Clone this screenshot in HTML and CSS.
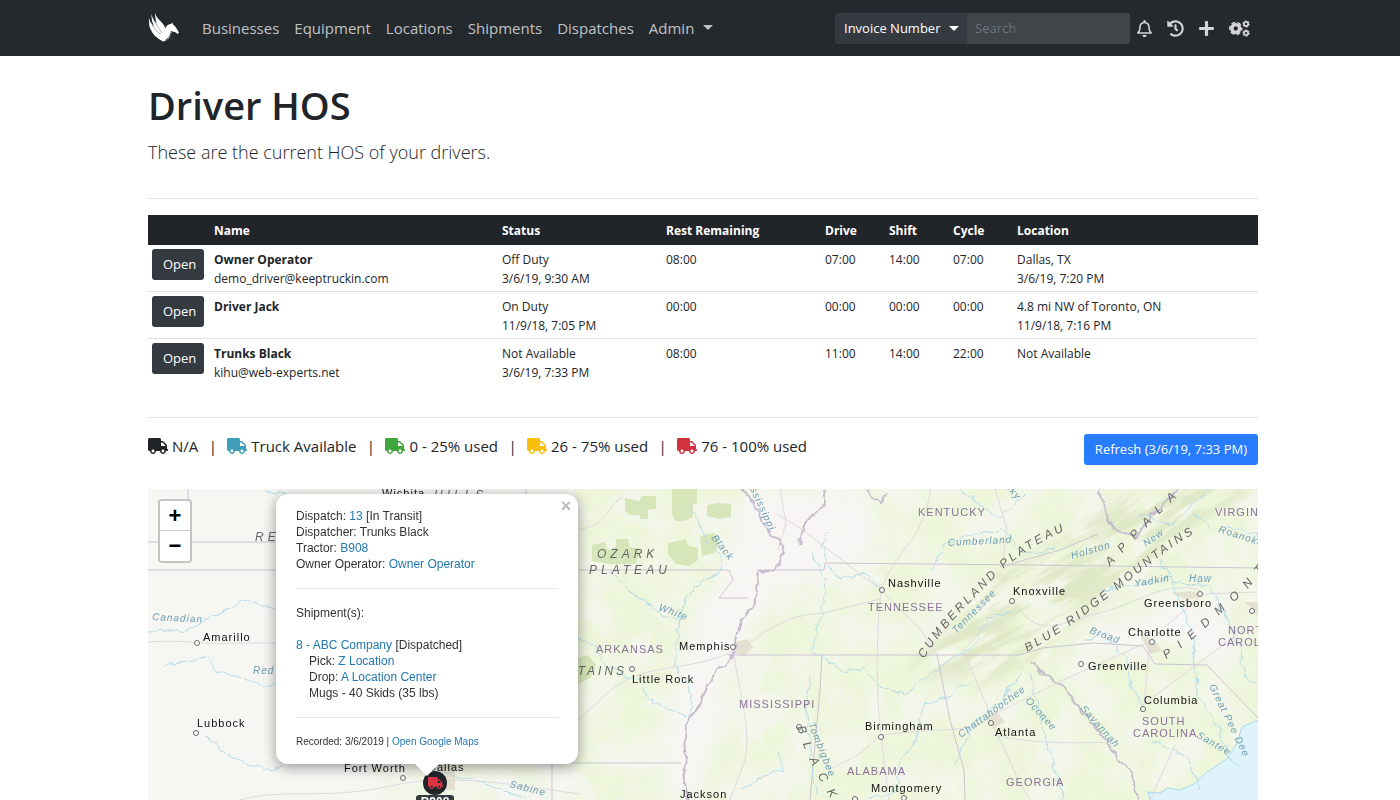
FILE: index.html
```
<!DOCTYPE html>
<html lang="en">
<head>
    <meta charset="UTF-8">
    <meta name="viewport" content="width=device-width, initial-scale=1">
    <title>Driver HOS</title>
    <link rel="stylesheet" href="styles.css">
</head>
<body>
    <!-- shared icons -->
    <svg class="sprite" aria-hidden="true">
        <symbol id="truck" viewBox="0 0 640 512">
            <path d="M624 352h-16V243.900c0-12.700-5.100-24.900-14.100-33.900L494 110.100c-9-9-21.200-14.100-33.900-14.100H416V48c0-26.500-21.500-48-48-48H48C21.500 0 0 21.500 0 48v320c0 26.500 21.500 48 48 48h16c0 53 43 96 96 96s96-43 96-96h128c0 53 43 96 96 96s96-43 96-96h48c8.800 0 16-7.200 16-16v-32c0-8.800-7.200-16-16-16zM160 464c-26.500 0-48-21.500-48-48s21.500-48 48-48 48 21.500 48 48-21.500 48-48 48zm320 0c-26.500 0-48-21.500-48-48s21.500-48 48-48 48 21.500 48 48-21.500 48-48 48zm80-208H416V144h44.100l99.900 99.900V256z"/>
        </symbol>
    </svg>

    <nav class="navbar">
        <div class="container navbar-inner">
            <a class="brand" href="#" aria-label="Home">
                <svg width="32" height="32" viewBox="0 0 32 32" fill="#fff">
                    <path d="M7 .5C8 6 12 8 15 12c2 3 3 5 3 8l-4 2C10 17 7 9 7 .5z"/>
                    <path d="M3.500 1.500C4 8 9 11 12 15l2 6-3 1C6 16 3 9 3.500 1.500z"/>
                    <path d="M1 5.500C1.500 11 6 14 9 17l4 6-3 1C4 19 0 12 1 5.500z"/>
                    <path d="M1 10.500c2 5 5 6 8 9l3 5-2 1C5 22 1 17 1 10.500z"/>
                    <path d="M3.500 17c2 3 5 4 7 6l3 4.500C8 26 4 22 3.500 17z"/>
                    <path d="M10 22c4 0 6-3 8-7 1-2 3-3 5-3l1.500-1.500.5 2c3 2 4 5 6 8l-1.500 1.500-2.500-2-3-.5c-1 4-3 9-9 10l-5-3z"/>
                    <path d="M23.500 19c-1 4-2 7-6 9" fill="none" stroke="#24292e" stroke-width="1"/>
                    <path d="M6 8c2 5 5 8 8 13M4 13c2 3 5 6 8 9" fill="none" stroke="#24292e" stroke-width=".4"/>
                </svg>
            </a>
            <div class="nav-links">
                <a href="#">Businesses</a>
                <a href="#">Equipment</a>
                <a href="#">Locations</a>
                <a href="#">Shipments</a>
                <a href="#">Dispatches</a>
                <button type="button" class="caret">Admin</button>
            </div>
            <form class="search">
                <div class="search-type caret">
                    <select aria-label="Search by">
                        <option>Invoice Number</option>
                    </select>
                </div>
                <input type="text" placeholder="Search" aria-label="Search">
            </form>
            <div class="nav-icons">
                <a href="#" aria-label="Notifications">
                    <svg width="15" height="17" viewBox="0 0 448 512"><path d="M439.390 362.290c-19.320-20.760-55.470-51.990-55.470-154.290 0-77.700-54.480-139.900-127.940-155.160V32c0-17.670-14.320-32-31.980-32s-31.980 14.330-31.980 32v20.840C118.560 68.100 64.080 130.300 64.080 208c0 102.300-36.150 133.530-55.470 154.290-6 6.450-8.660 14.160-8.610 21.710.11 16.400 12.980 32 32.100 32h383.800c19.120 0 32-15.600 32.100-32 .05-7.550-2.610-15.270-8.610-21.710zM67.530 368c21.220-27.970 44.420-74.330 44.530-159.420 0-.2-.06-.38-.06-.58 0-61.860 50.140-112 112-112s112 50.140 112 112c0 .2-.06.38-.06.58.11 85.100 23.310 131.460 44.530 159.420H67.530zM224 512c35.320 0 63.970-28.650 63.970-64H160.030c0 35.350 28.650 64 63.970 64z"/></svg>
                </a>
                <a href="#" aria-label="History">
                    <svg width="17" height="17" viewBox="0 0 512 512"><path d="M504 255.531c.253 136.640-111.180 248.372-247.820 248.468-59.015.042-113.223-20.530-155.822-54.911-11.077-8.940-11.905-25.541-1.839-35.607l11.267-11.267c8.609-8.609 22.353-9.551 31.891-1.984C173.062 425.135 212.781 440 256 440c101.705 0 184-82.311 184-184 0-101.705-82.311-184-184-184-48.814 0-93.149 18.969-126.068 49.932l50.754 50.754c10.080 10.080 2.941 27.314-11.313 27.314H24c-8.837 0-16-7.163-16-16V38.627c0-14.254 17.234-21.393 27.314-11.314l49.372 49.372C129.209 34.136 189.552 8 256 8c136.810 0 247.747 110.780 248 247.531zm-180.912 78.784l9.823-12.630c8.138-10.463 6.253-25.542-4.210-33.679L288 256.349V152c0-13.255-10.745-24-24-24h-16c-13.255 0-24 10.745-24 24v135.651l65.409 50.874c10.463 8.137 25.541 6.253 33.679-4.210z"/></svg>
                </a>
                <a href="#" aria-label="Add">
                    <svg width="15" height="17" viewBox="0 0 448 512"><path d="M416 208H272V64c0-17.670-14.330-32-32-32h-32c-17.670 0-32 14.330-32 32v144H32c-17.670 0-32 14.330-32 32v32c0 17.670 14.330 32 32 32h144v144c0 17.670 14.330 32 32 32h32c17.670 0 32-14.330 32-32V304h144c17.670 0 32-14.330 32-32v-32c0-17.670-14.330-32-32-32z"/></svg>
                </a>
                <a href="#" aria-label="Settings">
                    <svg width="21" height="17" viewBox="0 0 640 512" fill="none" stroke="currentColor">
                        <circle cx="205" cy="256" r="118" stroke-width="104"/>
                        <circle cx="205" cy="256" r="182" stroke-width="48" stroke-dasharray="120 70.600" stroke-dashoffset="60"/>
                        <circle cx="520" cy="116" r="64" stroke-width="54"/>
                        <circle cx="520" cy="116" r="98" stroke-width="30" stroke-dasharray="52 50.600"/>
                        <circle cx="520" cy="396" r="64" stroke-width="54"/>
                        <circle cx="520" cy="396" r="98" stroke-width="30" stroke-dasharray="52 50.600"/>
                    </svg>
                </a>
            </div>
        </div>
    </nav>

    <main class="container content">
        <h1>Driver HOS</h1>
        <p class="lead">These are the current HOS of your drivers.</p>
        <hr>
        <table class="drivers">
            <thead>
                <tr>
                    <th class="col-open"></th>
                    <th class="col-name">Name</th>
                    <th class="col-status">Status</th>
                    <th class="col-rest">Rest Remaining</th>
                    <th class="col-time">Drive</th>
                    <th class="col-time">Shift</th>
                    <th class="col-time">Cycle</th>
                    <th>Location</th>
                </tr>
            </thead>
            <tbody>
                <tr>
                    <td><button type="button" class="btn btn-dark">Open</button></td>
                    <td><strong>Owner Operator</strong><br>demo_driver@keeptruckin.com</td>
                    <td>Off Duty<br>3/6/19, 9:30 AM</td>
                    <td>08:00</td>
                    <td>07:00</td>
                    <td>14:00</td>
                    <td>07:00</td>
                    <td>Dallas, TX<br>3/6/19, 7:20 PM</td>
                </tr>
                <tr>
                    <td><button type="button" class="btn btn-dark">Open</button></td>
                    <td><strong>Driver Jack</strong></td>
                    <td>On Duty<br>11/9/18, 7:05 PM</td>
                    <td>00:00</td>
                    <td>00:00</td>
                    <td>00:00</td>
                    <td>00:00</td>
                    <td>4.8 mi NW of Toronto, ON<br>11/9/18, 7:16 PM</td>
                </tr>
                <tr>
                    <td><button type="button" class="btn btn-dark">Open</button></td>
                    <td><strong>Trunks Black</strong><br>kihu@web-experts.net</td>
                    <td>Not Available<br>3/6/19, 7:33 PM</td>
                    <td>08:00</td>
                    <td>11:00</td>
                    <td>14:00</td>
                    <td>22:00</td>
                    <td>Not Available</td>
                </tr>
            </tbody>
        </table>
        <hr>
        <div class="toolbar">
            <div class="legend">
                <span class="item"><svg class="truck"><use href="#truck"/></svg>N/A</span>
                <span class="sep">|</span>
                <span class="item"><svg class="truck available"><use href="#truck"/></svg>Truck Available</span>
                <span class="sep">|</span>
                <span class="item"><svg class="truck low"><use href="#truck"/></svg>0 - 25% used</span>
                <span class="sep">|</span>
                <span class="item"><svg class="truck mid"><use href="#truck"/></svg>26 - 75% used</span>
                <span class="sep">|</span>
                <span class="item"><svg class="truck high"><use href="#truck"/></svg>76 - 100% used</span>
            </div>
            <button type="button" class="btn btn-primary">Refresh (3/6/19, 7:33 PM)</button>
        </div>

        <div class="map">
            <svg class="tiles" viewBox="148 489 1110 311" preserveAspectRatio="xMinYMin slice">
                <defs>
                    <filter id="terrain" x="0" y="0" width="100%" height="100%">
                        <feTurbulence type="fractalNoise" baseFrequency=".026" numOctaves="6" seed="8"/>
                        <feColorMatrix values="0 0 0 0 .85  0 0 0 0 .92  0 0 0 0 .71  0 4 0 0 -1.400"/>
                    </filter>
                    <filter id="ridge" x="0" y="0" width="100%" height="100%">
                        <feTurbulence type="fractalNoise" baseFrequency=".018 .09" numOctaves="4" seed="3"/>
                        <feColorMatrix values="0 0 0 0 .74  0 0 0 0 .81  0 0 0 0 .57  0 5 0 0 -2.100"/>
                    </filter>
                    <filter id="wiggle" filterUnits="userSpaceOnUse" x="148" y="480" width="1110" height="330">
                        <feTurbulence type="fractalNoise" baseFrequency=".09" numOctaves="2" seed="5"/>
                        <feDisplacementMap in="SourceGraphic" scale="9" xChannelSelector="R" yChannelSelector="G"/>
                    </filter>
                    <filter id="soft"><feGaussianBlur stdDeviation="9"/></filter>
                    <mask id="mountains" maskUnits="userSpaceOnUse" x="148" y="480" width="1110" height="330">
                        <path fill="#fff" filter="url(#soft)" d="M905 675L950 620 1000 570 1060 540 1120 500 1150 480H1270L1200 525 1150 565 1090 610 1050 650 1000 680z"/>
                    </mask>
                    <path id="p-cumberland-plateau" d="M924 659C945 625 965 608 992 580S1045 540 1076 525"/>
                    <path id="p-blue-ridge" d="M1027 652C1060 634 1085 615 1115 592S1170 545 1208 526"/>
                    <path id="p-appala" d="M1110 566C1130 546 1150 522 1186 488"/>
                    <path id="p-piedmont" d="M1166 659C1195 640 1215 618 1236 600S1258 574 1280 552"/>
                    <path id="p-black" d="M797 727C805 752 812 767 836 808"/>
                </defs>

                <rect class="land" x="148" y="489" width="1110" height="311"/>
                <rect class="green" x="575" y="489" width="683" height="311"/>
                <rect x="575" y="489" width="683" height="311" filter="url(#terrain)"/>
                <rect x="370" y="765" width="205" height="35" filter="url(#terrain)" opacity=".6"/>
                <g filter="url(#soft)">
                    <path class="plain" d="M745 489H870L880 530 850 580 770 590 750 640 730 670 722 720 700 800H660L665 720 695 620 720 570z"/>
                    <path class="plain" d="M1120 620L1220 600 1240 680 1170 640 1060 660z"/>
                </g>
                <g mask="url(#mountains)">
                    <rect x="800" y="300" width="600" height="600" transform="rotate(-33 1080 580)" filter="url(#ridge)"/>
                </g>
                <g class="forest">
                    <path d="M625 498l14 3 3-5h14v13l-8 1v9h-7l-2-4h-10l-4-5zM672 489h25v14l-4 2v12l-8 4h-10l-3-7zM707 505l10-2 14 1v13l-12 2-12-3zM668 543l18-4 2 7 10 2v12l-8 6-14-2-8-10zM700 536l14-3 5 9-4 11-13 3zM592 545l13-3 3 8 8-3v-8h12l2 8 10 2-4 15h-28l-16-3zM570 660l18-5 8 10-6 13-20 10z"/>
                </g>
                <path class="urban" d="M735 642l12-3 6 8-8 9-10-3zM985 715l12-3 8 10-12 6zM425 765h30v25h-25zM1140 635l14 4 8 12-12 3zM1172 593l18-2 14 4-16 5zM1245 602h13v14z"/>
                <path class="water" d="M1258 720l-16 7-5 16-10 16-20 13-13 12-14 6-12-2-8 5-12-1 2 8h110z"/>

                <g class="roads">
                    <path d="M148 642c40-3 60 4 90 1h40M240 800c40-12 90 0 150-14s130 0 190 8M578 720c25-20 30-33 55-43 40-16 80-5 130-44 25-16 40-18 60-20l58-14M881 590c20-50 38-40 50-101M881 590L800 528l-23-14M881 590c-6 60-4 110 0 145l8 65M881 590l40 40 16 25M881 735c60-8 90 0 112-20l70-35 85-38 55-48 55-2M828 770l30-15 23-20M733 650c8 50 18 80 12 110l-15 40M992 723l28 60 10 17M992 735c60 12 100 6 120 8M1200 590c-40-10-60 15-110 25-50 20-60 10-77-14M1013 600l-50 50 28 66M1150 800l25-55M1143 705l100-75M1150 640l-6 65M578 530c30-5 25-20 45-33M780 489l6 34-8 27M995 489l12 40-4 30"/>
                </g>
                <g class="borders">
                    <path d="M148 542H278M148 570H278M188 489V542M570 570H729L733 580 719 598H748M765 570H824L825 563 1030 565 1258 568M728 655H1020L1042 648 1093 643 1143 646 1155 664 1207 665 1258 718M822 655L820 690 810 800M937 655L950 720 964 770 965 800M570 763H681M552 763V800M526 489V495M1000 567L1060 550 1098 534"/>
                </g>
                <g filter="url(#wiggle)">
                    <path class="state-river" d="M738 484l16 18 10 24 14 14 6 12-8 16-16 4-4 20-2 14-12 12-5 20-3 14-6 10-14 13-6 14-10 20-12 14-1 18 2 18-4 14 6 30"/>
                    <path class="state-river" d="M800 545l6-24 20-20-2-12M866 489l15 14 6-10M1100 489l5 26 10 15 20 6 14-18 30-30M1032 662l14 14 16 8 14 20 18 20 24 34 14 18 8 30"/>
                    <path class="river" d="M690 502l12 28 4 14 16 14-2 14-20 12-14 14-6 20-4 24v26l12 18 4 18-2 14M612 570l16 20 14 8 14 12 22 10M575 635l20 10 12 22 32 14 8 16 22 12 18 8M828 532l-6 14 12 28 14 4 20-4 16 18M812 552l14 30-6 40-10 28 34 22 20-4 14 16 26 12 28-24 40-26 16-26 24-8M810 675l-4 40 10 80M932 570l12-26 30-10 30-4 20 24 30-4M868 800l30-10-2-20 20-30 8-36 30-8 4-10 16-2M955 765l16-40 30-24 22-32M148 632l40-2 24-12 30-18 36 10M165 665l30-4 10-6 14 18 20 4 24 8h20M205 736l14 10 14 12 34 12 14-4M265 489l30 10M430 770l50 12 46 16M740 790l20-12 22-8-4-18M1030 672l14 60 14 50 6 18M1160 560l10 16 22 60 6 60 20 30 10 30 16 14M1100 590l50-8 20-6M1083 640l20-6 24 24 4 28 14 24M1150 740l40 20 10 30M1170 582l40 4 30 60 4 30 14 6M960 489l40 30 24-26M1140 515l30 10 40-36M1226 525l30 8 10 30M1210 530l-20-26"/>
                </g>
                <path class="coast" d="M1258 720l-16 7-5 16-10 16-20 13-13 12-14 6-12-2-8 5-12-1 2 8"/>

                <g class="cities">
                    <circle cx="197" cy="643" r="2.500"/><text x="203" y="641">Amarillo</text>
                    <circle cx="196" cy="733" r="2.500"/><text x="197" y="727">Lubbock</text>
                    <text x="382" y="497">Wichita</text>
                    <circle cx="403" cy="778" r="2.500"/><text x="344" y="772">Fort Worth</text>
                    <text x="428" y="771">Dallas</text>
                    <circle cx="733" cy="647" r="2.500"/><text x="679" y="650">Memphis</text>
                    <circle cx="632" cy="669" r="2.500"/><text x="632" y="683">Little Rock</text>
                    <text x="680" y="798">Jackson</text>
                    <circle cx="882" cy="590" r="2.500"/><text x="888" y="587">Nashville</text>
                    <circle cx="1012" cy="601" r="2.500"/><text x="1013" y="595">Knoxville</text>
                    <circle cx="881" cy="737" r="2.500"/><text x="865" y="730">Birmingham</text>
                    <circle cx="904" cy="798" r="2.500"/><text x="871" y="792">Montgomery</text>
                    <circle cx="991" cy="723" r="2.500"/><text x="995" y="736">Atlanta</text>
                    <circle cx="1200" cy="594" r="2.500"/><text x="1144" y="607">Greensboro</text>
                    <circle cx="1152" cy="642" r="2.500"/><text x="1128" y="636">Charlotte</text>
                    <circle cx="1081" cy="664" r="2.500"/><text x="1088" y="670">Greenville</text>
                    <circle cx="1143" cy="709" r="2.500"/><text x="1144" y="704">Columbia</text>
                    <circle cx="1252" cy="611" r="2.500"/><circle cx="855" cy="799" r="2.500"/><circle cx="799" cy="727" r="2.500"/>
                </g>
                <g class="states">
                    <text x="596" y="653">ARKANSAS</text>
                    <text x="739" y="708">MISSISSIPPI</text>
                    <text x="868" y="611">TENNESSEE</text>
                    <text x="918" y="516">KENTUCKY</text>
                    <text x="847" y="775">ALABAMA</text>
                    <text x="1006" y="786">GEORGIA</text>
                    <text x="1215" y="516">VIRGINIA</text>
                    <text x="1228" y="634">NORTH</text>
                    <text x="1218" y="646">CAROLINA</text>
                    <text x="1142" y="725">SOUTH</text>
                    <text x="1133" y="737">CAROLINA</text>
                </g>
                <g class="rivers">
                    <text transform="translate(152 620) rotate(3)">Canadian</text>
                    <text transform="translate(253 674)">Red</text>
                    <text transform="translate(509 787) rotate(14)">Sabine</text>
                    <text transform="translate(711 538) rotate(52)">Black</text>
                    <text transform="translate(658 610) rotate(20)">White</text>
                    <text transform="translate(750 489) rotate(65)">ssissippi</text>
                    <text transform="translate(948 546) rotate(-3)">Cumberland</text>
                    <text transform="translate(956 634) rotate(-45)">Tennessee</text>
                    <text transform="translate(961 738) rotate(-36)">Chattahoochee</text>
                    <text transform="translate(1025 701) rotate(48)">Oconee</text>
                    <text transform="translate(1080 709) rotate(48)">Savannah</text>
                    <text transform="translate(1072 559) rotate(-16)">Holston</text>
                    <text transform="translate(1146 547) rotate(-35)">New</text>
                    <text transform="translate(1135 587) rotate(-10)">Yadkin</text>
                    <text transform="translate(1189 582)">Haw</text>
                    <text transform="translate(1218 532) rotate(18)">Roanoke</text>
                    <text transform="translate(1089 633) rotate(20)">Broad</text>
                    <text transform="translate(1209 686) rotate(64)">Great Pee Dee</text>
                    <text transform="translate(1196 737) rotate(30)">Santee</text>
                    <text transform="translate(808 724) rotate(68)">Tombigbee</text>
                    <text transform="translate(1005 487) rotate(48)">cky</text>
                </g>
                <g class="ranges">
                    <text x="597" y="558">OZARK</text>
                    <text x="589" y="574">PLATEAU</text>
                    <text x="255" y="541">RED</text>
                    <text x="434" y="499">HILLS</text>
                    <text class="tight" x="566" y="675">NTAINS</text>
                    <text class="tight"><textPath href="#p-cumberland-plateau">CUMBERLAND PLATEAU</textPath></text>
                    <text class="tight"><textPath href="#p-blue-ridge">BLUE RIDGE MOUNTAINS</textPath></text>
                    <text class="wide"><textPath href="#p-appala">APPALA</textPath></text>
                    <text class="wide"><textPath href="#p-piedmont">PIEDMONT</textPath></text>
                    <text class="wide"><textPath href="#p-black">BLACK</textPath></text>
                </g>
            </svg>

            <div class="zoom-control">
                <button type="button" aria-label="Zoom in">+</button>
                <button type="button" aria-label="Zoom out">&minus;</button>
            </div>

            <div class="marker">
                <span class="marker-dot"><svg><use href="#truck"/></svg></span>
                <span class="marker-label">B908</span>
            </div>

            <div class="popup">
                <button type="button" class="popup-close" aria-label="Close">&times;</button>
                <div>Dispatch: <a href="#">13</a> [In Transit]</div>
                <div>Dispatcher: Trunks Black</div>
                <div>Tractor: <a href="#">B908</a></div>
                <div>Owner Operator: <a href="#">Owner Operator</a></div>
                <hr>
                <div class="shipments">Shipment(s):</div>
                <div><a href="#">8 - ABC Company</a> [Dispatched]</div>
                <div class="stop">Pick: <a href="#">Z Location</a></div>
                <div class="stop">Drop: <a href="#">A Location Center</a></div>
                <div class="stop">Mugs - 40 Skids (35 lbs)</div>
                <hr>
                <div class="recorded">Recorded: 3/6/2019 | <a href="#">Open Google Maps</a></div>
            </div>
        </div>
    </main>
</body>
</html>
```
FILE: styles.css
```
* {
    box-sizing: border-box;
}
body {
    margin: 0;
    min-height: 100vh;
    display: flex;
    flex-direction: column;
    font-family: "Open Sans", "Noto Sans", sans-serif;
    font-size: 15px;
    line-height: 24px;
    color: #212529;
    background-color: #fff;
}
button, select, input {
    font-family: inherit;
    margin: 0;
}
.sprite {
    position: absolute;
    width: 0;
    height: 0;
}
.container {
    width: 100%;
    max-width: 1140px;
    margin: 0 auto;
    padding: 0 12px 0 18px;
}
hr {
    width: 100%;
    margin: 0;
    border: 0;
    border-top: 1px solid #e5e5e5;
}

/* navbar */
.navbar {
    background-color: #24292e;
}
.navbar-inner {
    height: 56px;
    display: flex;
    align-items: center;
}
.brand {
    display: flex;
    margin-right: 22px;
}
.nav-links {
    display: flex;
    gap: 15px;
    margin-right: auto;
}
.nav-links a, .nav-links button {
    padding: 0;
    border: 0;
    background: none;
    color: #c0c2c4;
    font-size: 15px;
    line-height: 24px;
    text-decoration: none;
}
.caret::after {
    content: "";
    display: inline-block;
    margin-left: 9px;
    vertical-align: 4px;
    border-top: 5px solid;
    border-left: 5px solid transparent;
    border-right: 5px solid transparent;
}
.search {
    display: flex;
    width: 295px;
    height: 31px;
    margin-right: 7px;
}
.search-type {
    position: relative;
    width: 132px;
    color: #fff;
}
.search-type::after {
    position: absolute;
    right: 8px;
    top: 13px;
    pointer-events: none;
}
.search select {
    appearance: none;
    width: 100%;
    height: 100%;
    padding: 0 9px;
    border: 0;
    border-radius: 3px 0 0 3px;
    background-color: #343a40;
    color: #fff;
    font-size: 13px;
}
.search input {
    flex: 1;
    min-width: 0;
    padding: 0 8px;
    border: 0;
    border-radius: 0 3px 3px 0;
    background-color: #404549;
    color: #fff;
    font-size: 13px;
}
.search input::placeholder {
    color: #6c757d;
}
.nav-icons {
    display: flex;
    align-items: center;
    gap: 15px;
    margin-right: 8px;
}
.nav-icons a {
    display: flex;
    color: #d3d4d5;
}
.nav-icons svg {
    fill: currentColor;
}
.nav-icons a:last-child svg {
    fill: none;
}

/* page */
.content {
    flex: 1;
    display: flex;
    flex-direction: column;
}
h1 {
    margin: 25px 0 9px;
    font-size: 38px;
    line-height: 48px;
    font-weight: 600;
}
.lead {
    margin: 0 0 31px;
    font-size: 18px;
    line-height: 29px;
    font-weight: 300;
}
.btn {
    border: 0;
    border-radius: 3px;
    height: 31px;
    padding: 0 11px;
    color: #fff;
    font-size: 13px;
    line-height: 21px;
    cursor: pointer;
}
.btn-dark {
    background-color: #343a40;
}
.btn-primary {
    background-color: #277cff;
}

/* drivers table */
.drivers {
    width: 100%;
    margin: 16px 0 31px;
    table-layout: fixed;
    border-collapse: separate;
    border-spacing: 0;
    font-size: 12px;
    line-height: 19px;
}
.drivers th {
    height: 30px;
    padding: 0 4px;
    background-color: #212529;
    color: #fff;
    text-align: left;
}
.drivers td {
    height: 47px;
    padding: 5px 4px 3px;
    vertical-align: top;
    border-bottom: 1px solid #dee2e6;
}
.drivers td:first-child {
    padding-top: 4px;
}
.drivers tr:last-child td {
    border-bottom: 0;
}
.drivers .btn {
    display: block;
    width: 52px;
}
.col-open { width: 62px; }
.col-name { width: 288px; }
.col-status { width: 164px; }
.col-rest { width: 159px; }
.col-time { width: 64px; }

/* legend */
.toolbar {
    display: flex;
    justify-content: space-between;
    margin: 16px 0 24px;
}
.legend {
    display: flex;
}
.legend .item {
    display: flex;
    gap: 4px;
}
.legend .sep {
    width: 29px;
    text-align: center;
}
.truck {
    width: 20px;
    height: 16px;
    margin-top: 4px;
    fill: #212529;
}
.available { fill: #3f9fba; }
.low { fill: #3fa53c; }
.mid { fill: #fbbe0a; }
.high { fill: #d0333f; }

/* map */
.map {
    position: relative;
    flex: 1;
    min-height: 311px;
    overflow: hidden;
    font-family: "Liberation Sans", Arial, sans-serif;
}
.tiles {
    position: absolute;
    width: 100%;
    height: 100%;
}
.land { fill: #f6f6f3; }
.green { fill: #f4f6eb; }
.plain { fill: #f7f6f5; opacity: .9; }
.forest { fill: #cfe2ae; opacity: .8; }
.urban { fill: #e0dccb; opacity: .8; }
.water { fill: #def3fc; }
.roads, .borders, .river, .state-river, .coast { fill: none; }
.roads { stroke: #dfd8df; }
.borders { stroke: #cdc3d2; }
.state-river { stroke: #c5bbcd; stroke-width: 2; }
.river { stroke: #b5dbe9; }
.coast { stroke: #a9d8ea; }
.cities {
    font-size: 11px;
    letter-spacing: 1px;
    fill: #111;
}
.cities circle {
    fill: #fff;
    stroke: #666;
}
.states {
    font-size: 11px;
    letter-spacing: 1px;
    fill: #8a7399;
}
.rivers {
    font-size: 10px;
    font-style: italic;
    letter-spacing: 1px;
    fill: #6d9db3;
}
.ranges {
    font-size: 12px;
    font-style: italic;
    letter-spacing: 4px;
    fill: #666;
}
.ranges .tight { letter-spacing: 3px; }
.ranges .wide { letter-spacing: 10px; }

.zoom-control {
    position: absolute;
    left: 10px;
    top: 10px;
    border: 2px solid #c4c4c2;
    border-radius: 4px;
    overflow: hidden;
}
.zoom-control button {
    display: block;
    width: 30px;
    height: 30px;
    padding: 0;
    border: 0;
    background-color: #fff;
    color: #000;
    font: bold 22px/30px "Liberation Sans", Arial, sans-serif;
}
.zoom-control button:first-child {
    border-bottom: 1px solid #ccc;
}
.marker {
    position: absolute;
    left: 268px;
    top: 282px;
    width: 38px;
    display: flex;
    flex-direction: column;
    align-items: center;
}
.marker-dot {
    display: flex;
    align-items: center;
    justify-content: center;
    width: 24px;
    height: 24px;
    border-radius: 50%;
    background-color: #212529;
}
.marker-dot svg {
    width: 15px;
    height: 12px;
    fill: #dc3545;
}
.marker-label {
    width: 100%;
    border-radius: 3px;
    background-color: #343a40;
    color: #fff;
    font-size: 12px;
    line-height: 14px;
    font-weight: bold;
    text-align: center;
}
.popup {
    position: absolute;
    left: 128px;
    top: 5px;
    width: 302px;
    padding: 14px 20px;
    border-radius: 12px;
    background-color: #fff;
    box-shadow: 0 3px 14px rgba(0, 0, 0, .4);
    color: #333;
    font-size: 12px;
    line-height: 16px;
}
/* tip pointing at the marker */
.popup::after {
    content: "";
    position: absolute;
    left: 139px;
    top: 100%;
    border-top: 12px solid #fff;
    border-left: 12px solid transparent;
    border-right: 12px solid transparent;
}
.popup a {
    color: #2278b0;
    text-decoration: none;
}
.popup hr {
    margin: 16px 0;
}
.popup-close {
    position: absolute;
    right: 4px;
    top: 4px;
    width: 16px;
    height: 16px;
    padding: 0;
    border: 0;
    background: none;
    color: #bbb;
    font: bold 18px/16px "Liberation Sans", Arial, sans-serif;
}
.shipments {
    margin-bottom: 16px;
}
.stop {
    padding-left: 13px;
}
.recorded {
    font-size: 10px;
}
```
